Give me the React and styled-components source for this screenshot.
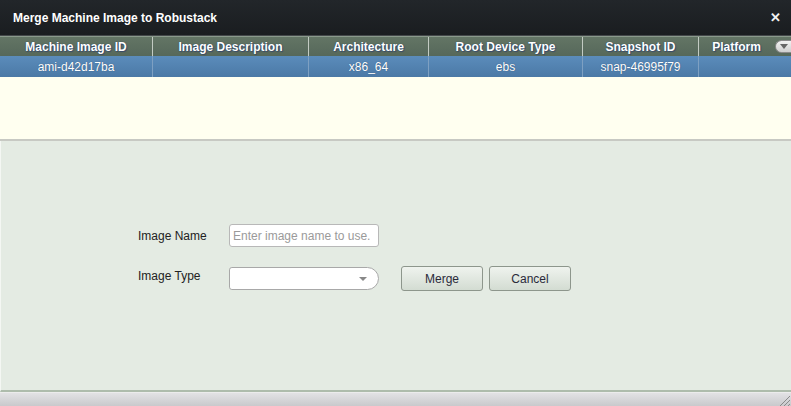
import { createGlobalStyle, styled } from "styled-components";

const GlobalStyle = createGlobalStyle`
    html, body { margin: 0; padding: 0; }
    body {
        font-family: "Liberation Sans", Arial, sans-serif;
        font-size: 12px;
        background: #fff;
    }
`

const Window = styled.div`
    width: 791px;
    height: 406px;
    display: flex;
    flex-direction: column;
    overflow: hidden;
`
const TitleBar = styled.div`
    height: 36px;
    flex: none;
    display: flex;
    align-items: center;
    justify-content: space-between;
    padding: 0 10px 0 13px;
    background: linear-gradient(#22262a, #1a1d20);
    border-bottom: 1px solid #44484a;
    color: #fff;
    font-weight: bold;
    font-size: 12px;
    box-sizing: border-box;
`
const Close = styled.span`
    font-size: 13px;
    font-weight: bold;
    color: #f2f2f2;
    line-height: 1;
`
const HeaderRow = styled.div`
    display: flex;
    height: 20px;
    flex: none;
    background: linear-gradient(#637565, #56685a);
    border-top: 1px solid #8a9a8c;
    box-sizing: border-box;
`
const HeaderCell = styled.div`
    width: ${p => p.$w}px;
    flex: none;
    display: flex;
    align-items: center;
    justify-content: center;
    color: #fff;
    font-weight: bold;
    font-size: 12px;
    text-shadow: 0 0 1px #1c3a5c, 1px 1px 1px #3c4c6a;
    border-right: ${p => p.$last ? "none" : "1px solid #c3cbc3"};
    box-sizing: border-box;
`
const MenuButton = styled.div`
    flex: 1;
    display: flex;
    align-items: center;
    justify-content: flex-end;
`
const MenuKnob = styled.div`
    width: 16px;
    height: 13px;
    border-radius: 7px 0 0 7px;
    background: linear-gradient(#f2f2f2, #cfcfcf);
    border: 1px solid #8a8a8a;
    border-right: none;
    display: flex;
    align-items: center;
    padding-left: 4px;
    box-sizing: border-box;
`
const DataRow = styled.div`
    display: flex;
    height: 21px;
    flex: none;
    background: linear-gradient(#5b8cbb, #4b79a6);
`
const DataCell = styled.div`
    width: ${p => p.$w}px;
    flex: ${p => p.$last ? 1 : "none"};
    display: flex;
    align-items: center;
    justify-content: center;
    color: #fff;
    font-size: 12px;
    text-shadow: 0 0 1px #2a4a70;
    border-right: ${p => p.$last ? "none" : "1px solid #7ea0c2"};
    box-sizing: border-box;
`
const EmptyArea = styled.div`
    height: 62px;
    flex: none;
    background: #fffff0;
    border-bottom: 2px solid #c7c9c3;
`
const FormPanel = styled.div`
    flex: 1;
    background: #e4ebe3;
    border-left: 1px solid #f4f7f3;
    border-bottom: 2px solid #aebcac;
    display: flex;
    flex-direction: column;
    padding: 83px 0 0 137px;
    gap: 19px;
`
const FormRow = styled.div`
    display: flex;
    align-items: center;
`
const Label = styled.label`
    width: 91px;
    color: #222;
    font-size: 12px;
    margin-top: ${p => p.$offset || 0}px;
`
const TextInput = styled.input`
    width: 150px;
    height: 23px;
    box-sizing: border-box;
    border: 1px solid #b8b8b8;
    border-radius: 3px;
    padding: 0 3px;
    font-family: "Liberation Sans", Arial, sans-serif;
    font-size: 12px;
    background: #fff;
    &::placeholder { color: #9a9a9a; }
`
const SelectBox = styled.div`
    width: 150px;
    height: 23px;
    box-sizing: border-box;
    border: 1px solid #a8a8a8;
    border-radius: 3px 12px 12px 3px;
    background: #fff;
    display: flex;
    align-items: center;
    justify-content: flex-end;
    padding-right: 11px;
`
const Button = styled.button`
    width: 82px;
    height: 25px;
    margin-left: ${p => p.$gap}px;
    border: 1px solid #8d968c;
    border-radius: 3px;
    background: linear-gradient(#eff3ee, #d3dcd2);
    font-family: "Liberation Sans", Arial, sans-serif;
    font-size: 12px;
    color: #2a2a3a;
    padding: 0;
`
const Footer = styled.div`
    height: 13px;
    flex: none;
    background: linear-gradient(#e2e2e4, #c9c9cc);
    border-top: 1px solid #ececec;
    display: flex;
    justify-content: flex-end;
    align-items: flex-end;
`

const columns = [
    { title: "Machine Image ID", w: 153, value: "ami-d42d17ba" },
    { title: "Image Description", w: 156, value: "" },
    { title: "Architecture", w: 120, value: "x86_64" },
    { title: "Root Device Type", w: 154, value: "ebs" },
    { title: "Snapshot ID", w: 116, value: "snap-46995f79" },
    { title: "Platform", w: 75, value: "" },
]

function App() {
    const lastIndex = columns.length - 1;
    return <Window>
        <GlobalStyle />
        <TitleBar>
            <span>Merge Machine Image to Robustack</span>
            <Close>✕</Close>
        </TitleBar>
        <HeaderRow>
            {columns.map((c, i) => <HeaderCell key={c.title} $w={c.w} $last={i === lastIndex}>{c.title}</HeaderCell>)}
            <MenuButton>
                <MenuKnob>
                    <svg width="8" height="5" viewBox="0 0 8 5"><path d="M0 0h8L4 5z" fill="#666" /></svg>
                </MenuKnob>
            </MenuButton>
        </HeaderRow>
        <DataRow>
            {columns.map((c, i) => <DataCell key={c.title} $w={c.w} $last={i === lastIndex}>{c.value}</DataCell>)}
        </DataRow>
        <EmptyArea />
        <FormPanel>
            <FormRow>
                <Label>Image Name</Label>
                <TextInput placeholder="Enter image name to use." />
            </FormRow>
            <FormRow>
                <Label $offset={-6}>Image Type</Label>
                <SelectBox>
                    <svg width="8" height="4" viewBox="0 0 8 4"><path d="M0 0h8L4 4z" fill="#888" /></svg>
                </SelectBox>
                <Button $gap={22}>Merge</Button>
                <Button $gap={6}>Cancel</Button>
            </FormRow>
        </FormPanel>
        <Footer>
            <svg width="14" height="12" viewBox="0 0 14 12">
                <path d="M3 12L13 2M7 12L13 6M11 12L13 10" stroke="#8a8a8a" strokeWidth="1" />
            </svg>
        </Footer>
    </Window>
}

export default App;
